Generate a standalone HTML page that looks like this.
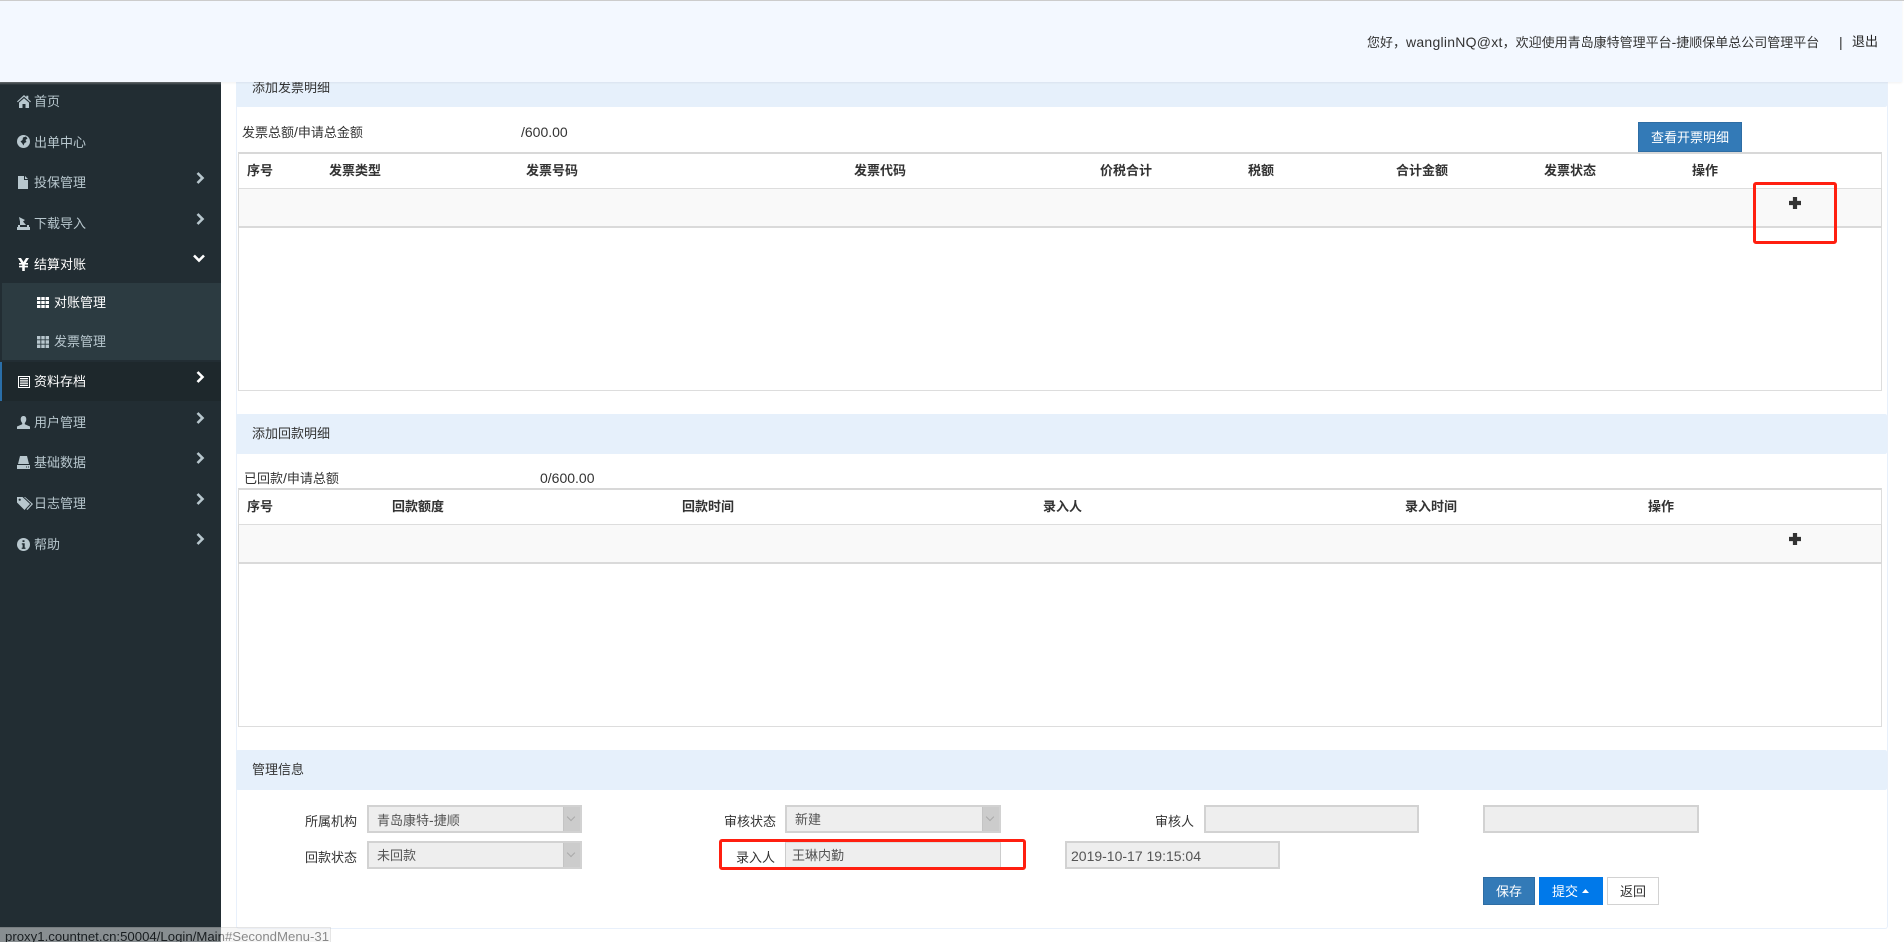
<!DOCTYPE html>
<html lang="zh-CN">
<head>
<meta charset="utf-8">
<title>管理平台</title>
<style>
html,body{margin:0;padding:0;background:#fff;width:1904px;height:942px;overflow:hidden}
body{position:relative;font-family:"Liberation Sans","Noto Sans CJK SC",sans-serif;font-size:13px;color:#333}
.a{position:absolute;box-sizing:border-box}
.t{position:absolute;line-height:20px;height:20px;white-space:nowrap;margin-top:1px}
.l{font-size:14px}
.s{color:#b8c7ce}
.w{color:#fff}
.b{font-weight:bold}
svg{position:absolute;display:block;overflow:visible}
.sec{position:absolute;left:236px;width:1651px;height:40px;background:#e6f0fb;border-radius:2px}
.inp{position:absolute;box-sizing:border-box;height:28px;background:#eee;border:2px solid #d2d2d2}
.arr{position:absolute;right:0;top:0;width:16px;height:24px;background:#ccc;border-left:1px solid #c4c4c4}
.arr i{position:absolute;left:4px;top:7px;width:5px;height:5px;border-right:1px solid #aaa;border-bottom:1px solid #aaa;transform:rotate(45deg)}
</style>
</head>
<body>

<!-- content card -->
<div class="a" style="left:236px;top:60px;width:1652px;height:869px;border:1px solid #e8f0fb;border-top:none;border-radius:0 0 3px 3px"></div>

<!-- section 1 -->
<div class="sec" style="top:67px"></div>
<div class="t" style="left:252px;top:77px">添加发票明细</div>
<div class="t" style="left:242px;top:121px">发票总额<span class="l">/</span>申请总金额</div>
<div class="t l" style="left:521px;top:121px">/600.00</div>
<div class="a" style="left:1638px;top:122px;width:104px;height:30px;background:#337ab7;border:1px solid #2e6da4"></div>
<div class="t w" style="left:1651px;top:127px">查看开票明细</div>

<div class="a" style="left:238px;top:152px;width:1644px;height:239px;border:1px solid #ddd;border-top:2px solid #d8d8d8"></div>
<div class="a" style="left:238px;top:188px;width:1644px;height:40px;background:#f9f9f9;border:1px solid #d8d8d8;border-top:1px solid #ddd;border-bottom:2px solid #dadada"></div>
<div class="t b" style="left:247px;top:160px">序号</div>
<div class="t b" style="left:329px;top:160px">发票类型</div>
<div class="t b" style="left:526px;top:160px">发票号码</div>
<div class="t b" style="left:854px;top:160px">发票代码</div>
<div class="t b" style="left:1100px;top:160px">价税合计</div>
<div class="t b" style="left:1248px;top:160px">税额</div>
<div class="t b" style="left:1396px;top:160px">合计金额</div>
<div class="t b" style="left:1544px;top:160px">发票状态</div>
<div class="t b" style="left:1692px;top:160px">操作</div>
<svg style="left:1789px;top:197px" width="12" height="12" viewBox="0 0 12 12"><path d="M3.900 0h4.200v3.900H12v4.200H8.100V12H3.900V8.100H0V3.900h3.900z" fill="#333"/></svg>
<div class="a" style="left:1753px;top:182px;width:84px;height:62px;border:3px solid #ff1f10;border-radius:3px"></div>

<!-- section 2 -->
<div class="sec" style="top:414px"></div>
<div class="t" style="left:252px;top:423px">添加回款明细</div>
<div class="t" style="left:244px;top:467px">已回款<span class="l">/</span>申请总额</div>
<div class="t l" style="left:540px;top:467px">0/600.00</div>

<div class="a" style="left:238px;top:488px;width:1644px;height:239px;border:1px solid #ddd;border-top:2px solid #d8d8d8"></div>
<div class="a" style="left:238px;top:524px;width:1644px;height:40px;background:#f9f9f9;border:1px solid #d8d8d8;border-top:1px solid #ddd;border-bottom:2px solid #dadada"></div>
<div class="t b" style="left:247px;top:496px">序号</div>
<div class="t b" style="left:392px;top:496px">回款额度</div>
<div class="t b" style="left:682px;top:496px">回款时间</div>
<div class="t b" style="left:1043px;top:496px">录入人</div>
<div class="t b" style="left:1405px;top:496px">录入时间</div>
<div class="t b" style="left:1648px;top:496px">操作</div>
<svg style="left:1789px;top:533px" width="12" height="12" viewBox="0 0 12 12"><path d="M3.900 0h4.200v3.900H12v4.200H8.100V12H3.900V8.100H0V3.900h3.900z" fill="#333"/></svg>

<!-- section 3 -->
<div class="sec" style="top:750px"></div>
<div class="t" style="left:252px;top:759px">管理信息</div>

<div class="t" style="left:305px;top:811px">所属机构</div>
<div class="inp" style="left:367px;top:805px;width:215px"><div class="arr"><i></i></div></div>
<div class="t" style="left:377px;top:809px;color:#555">青岛康特<span class="l">-</span>捷顺</div>
<div class="t" style="left:305px;top:847px">回款状态</div>
<div class="inp" style="left:367px;top:841px;width:215px"><div class="arr"><i></i></div></div>
<div class="t" style="left:377px;top:845px;color:#555">未回款</div>

<div class="t" style="left:724px;top:811px">审核状态</div>
<div class="inp" style="left:785px;top:805px;width:216px"><div class="arr"><i></i></div></div>
<div class="t" style="left:795px;top:809px;color:#555">新建</div>

<div class="a" style="left:719px;top:839px;width:307px;height:31px;border:3px solid #ff1f10;border-radius:3px"></div>
<div class="t" style="left:736px;top:847px">录入人</div>
<div class="a" style="left:785px;top:842px;width:216px;height:25px;background:#eee;border-left:1px solid #ccc;border-right:1px solid #ccc;border-top:1px solid #ddd"></div>
<div class="t" style="left:792px;top:845px;color:#555">王琳内勤</div>

<div class="t" style="left:1155px;top:811px">审核人</div>
<div class="inp" style="left:1204px;top:805px;width:215px"></div>
<div class="inp" style="left:1483px;top:805px;width:216px"></div>
<div class="inp" style="left:1065px;top:841px;width:215px"></div>
<div class="t l" style="left:1071px;top:845px;color:#555">2019-10-17 19:15:04</div>

<div class="a" style="left:1483px;top:877px;width:52px;height:28px;background:#337ab7;border:1px solid #2e6da4"></div>
<div class="t w" style="left:1496px;top:881px">保存</div>
<div class="a" style="left:1539px;top:877px;width:64px;height:28px;background:#0079ea"></div>
<div class="t w" style="left:1552px;top:881px">提交</div>
<svg style="left:1582px;top:889px" width="7" height="4" viewBox="0 0 7 4"><path d="M3.500 0L7 4H0z" fill="#fff"/></svg>
<div class="a" style="left:1607px;top:877px;width:52px;height:28px;background:#fff;border:1px solid #d2d2d2"></div>
<div class="t" style="left:1620px;top:881px">返回</div>

<!-- sidebar -->
<div class="a" style="left:0;top:82px;width:221px;height:860px;background:#222d33"></div>
<div class="a" style="left:2px;top:283px;width:219px;height:77px;background:#2c3b41"></div>
<div class="a" style="left:0;top:362px;width:221px;height:39px;background:#1e282c"></div>
<div class="a" style="left:0;top:362px;width:2px;height:39px;background:#2a6ea8"></div>

<!-- home -->
<svg style="left:17px;top:95px" width="14" height="13" viewBox="0 0 14 13"><path d="M0 6.500L7 0l2.300 2.100V.8h2v3.200L14 6.500l-.8.8L7 1.800.8 7.300zM2 7.600L7 3.200l5 4.400V13H8.500V9h-3v4H2z" fill="#b8c7ce"/></svg>
<div class="t s" style="left:34px;top:91px">首页</div>
<!-- globe -->
<svg style="left:17px;top:135px" width="13" height="13" viewBox="0 0 13 13"><circle cx="6.500" cy="6.500" r="6.500" fill="#b8c7ce"/><path d="M6 2.500l3-1 1.500 2-2 1.500 1 2-2 1-1 2.500-1.500-2.500L3.500 6.500 5.500 5z" fill="#222d33"/></svg>
<div class="t s" style="left:34px;top:132px">出单中心</div>
<!-- file -->
<svg style="left:18px;top:176px" width="10" height="13" viewBox="0 0 10 13"><path d="M0 0h6v4h4v9H0zM7 0l3 3H7z" fill="#b8c7ce"/></svg>
<div class="t s" style="left:34px;top:172px">投保管理</div>
<!-- import -->
<svg style="left:17px;top:217px" width="13" height="13" viewBox="0 0 13 13"><path d="M2 0l6 3-2 1.500 3 3.500H3V4.500zM0 10h13v3H0zM1 8h2v2H1zM10 8h2v2h-2z" fill="#b8c7ce"/></svg>
<div class="t s" style="left:34px;top:213px">下载导入</div>
<!-- yen -->
<svg style="left:18px;top:258px" width="11" height="13" viewBox="0 0 11 13"><path d="M0 0h3l2.500 4L8 0h3L7.800 5H10v1.600H6.800v1.200H10v1.600H6.800V13H4.200V9.400H1V7.800h3.200V6.600H1V5h2.200z" fill="#fff"/></svg>
<div class="t w" style="left:34px;top:254px">结算对账</div>
<!-- th -->
<svg style="left:37px;top:297px" width="12" height="11" viewBox="0 0 12 11"><path d="M0 0h3.400v3H0zM4.300 0h3.400v3H4.300zM8.600 0H12v3H8.600zM0 4h3.400v3H0zM4.300 4h3.400v3H4.300zM8.600 4H12v3H8.600zM0 8h3.400v3H0zM4.300 8h3.400v3H4.300zM8.600 8H12v3H8.600z" fill="#fff"/></svg>
<div class="t w" style="left:54px;top:292px">对账管理</div>
<svg style="left:37px;top:336px" width="12" height="12" viewBox="0 0 12 12"><path d="M0 0h3.400v3.400H0zM4.300 0h3.400v3.400H4.300zM8.600 0H12v3.400H8.600zM0 4.300h3.400v3.400H0zM4.300 4.300h3.400v3.400H4.300zM8.600 4.300H12v3.400H8.600zM0 8.600h3.400V12H0zM4.300 8.600h3.400V12H4.300zM8.600 8.600H12V12H8.600z" fill="#b8c7ce"/></svg>
<div class="t s" style="left:54px;top:331px">发票管理</div>
<!-- list-alt -->
<svg style="left:18px;top:376px" width="12" height="12" viewBox="0 0 12 12"><path d="M0 0h12v12H0zM1 1v10h10V1zM2 2h8v1.300H2zM2 4.300h8v1.200H2zM2 6.500h8v1.200H2zM2 8.700h8V10H2z" fill="#fff" fill-rule="evenodd"/></svg>
<div class="t w" style="left:34px;top:371px">资料存档</div>
<!-- user -->
<svg style="left:17px;top:416px" width="13" height="13" viewBox="0 0 13 13"><path d="M6.500 0C8.300 0 9.300 1.300 9.300 3.300c0 1.500-.7 3-1.500 3.700v1.300L13 10.500V13H0v-2.500l5.200-2.200V7C4.400 6.300 3.700 4.800 3.700 3.300 3.700 1.300 4.700 0 6.500 0z" fill="#b8c7ce"/></svg>
<div class="t s" style="left:34px;top:412px">用户管理</div>
<!-- hdd -->
<svg style="left:17px;top:456px" width="13" height="13" viewBox="0 0 13 13"><path d="M3 0h7l2 8H1zM0 9h13v4H0z" fill="#b8c7ce"/><path d="M9 10.500h1v1H9zM11 10.500h1v1h-1z" fill="#222d33"/></svg>
<div class="t s" style="left:34px;top:452px">基础数据</div>
<!-- tags -->
<svg style="left:17px;top:497px" width="16" height="13" viewBox="0 0 16 13"><path d="M0 0h5.500L13 7l-5.500 6L0 5.500z" fill="#b8c7ce"/><path d="M7 0h1l8 7-5.500 6-1-.8L14.500 7z" fill="#b8c7ce"/><circle cx="2.700" cy="2.700" r="1.100" fill="#222d33"/></svg>
<div class="t s" style="left:34px;top:493px">日志管理</div>
<!-- info -->
<svg style="left:17px;top:538px" width="13" height="13" viewBox="0 0 13 13"><circle cx="6.500" cy="6.500" r="6.500" fill="#b8c7ce"/><path d="M5.500 2.200h2v1.800h-2zM4.800 5.200h2.900v4.400h.8v1.300H4.700V9.600h.9V6.500h-.8z" fill="#222d33"/></svg>
<div class="t s" style="left:34px;top:534px">帮助</div>

<!-- chevrons -->
<svg style="left:196px;top:172px" width="9" height="12" viewBox="0 0 9 12"><path d="M1.500 1l5 5-5 5" fill="none" stroke="#b8c7ce" stroke-width="2.600"/></svg>
<svg style="left:196px;top:213px" width="9" height="12" viewBox="0 0 9 12"><path d="M1.500 1l5 5-5 5" fill="none" stroke="#b8c7ce" stroke-width="2.600"/></svg>
<svg style="left:193px;top:254px" width="12" height="9" viewBox="0 0 12 9"><path d="M1 1.500l5 5 5-5" fill="none" stroke="#fff" stroke-width="2.600"/></svg>
<svg style="left:196px;top:371px" width="9" height="12" viewBox="0 0 9 12"><path d="M1.500 1l5 5-5 5" fill="none" stroke="#fff" stroke-width="2.600"/></svg>
<svg style="left:196px;top:412px" width="9" height="12" viewBox="0 0 9 12"><path d="M1.500 1l5 5-5 5" fill="none" stroke="#b8c7ce" stroke-width="2.600"/></svg>
<svg style="left:196px;top:452px" width="9" height="12" viewBox="0 0 9 12"><path d="M1.500 1l5 5-5 5" fill="none" stroke="#b8c7ce" stroke-width="2.600"/></svg>
<svg style="left:196px;top:493px" width="9" height="12" viewBox="0 0 9 12"><path d="M1.500 1l5 5-5 5" fill="none" stroke="#b8c7ce" stroke-width="2.600"/></svg>
<svg style="left:196px;top:533px" width="9" height="12" viewBox="0 0 9 12"><path d="M1.500 1l5 5-5 5" fill="none" stroke="#b8c7ce" stroke-width="2.600"/></svg>

<!-- top bar -->
<div class="a" style="left:0;top:0;width:1902px;height:82px;background:#f3f8ff;border-top:1px solid #ccc;box-shadow:0 1px 2px rgba(0,0,0,.06);z-index:5"></div>
<div class="a" style="left:0;top:82px;width:221px;height:3px;background:linear-gradient(#6a6f72,#222d33);z-index:4"></div>
<div class="a" style="left:1902px;top:0;width:2px;height:1px;background:#ccc;z-index:5"></div>
<div class="t" style="left:1367px;top:31px;z-index:6">您好，<span class="l" style="letter-spacing:.25px">wanglinNQ@xt</span>，欢迎使用青岛康特管理平台<span class="l">-</span>捷顺保单总公司管理平台</div>
<div class="t l" style="left:1839px;top:31px;z-index:6">|</div>
<div class="t" style="left:1852px;top:31px;z-index:6;color:#222">退出</div>

<!-- status bubble -->
<div class="a" style="left:0;top:927px;width:331px;height:15px;overflow:hidden;background:#eee;border:1px solid #ccc;border-left:none;border-bottom:none;opacity:.5;z-index:7">
<div class="t" style="left:5px;top:-1px;margin-top:0;font-size:13.2px;color:#111">proxy1.countnet.cn:50004/Login/Main#SecondMenu-31</div>
</div>

</body>
</html>
